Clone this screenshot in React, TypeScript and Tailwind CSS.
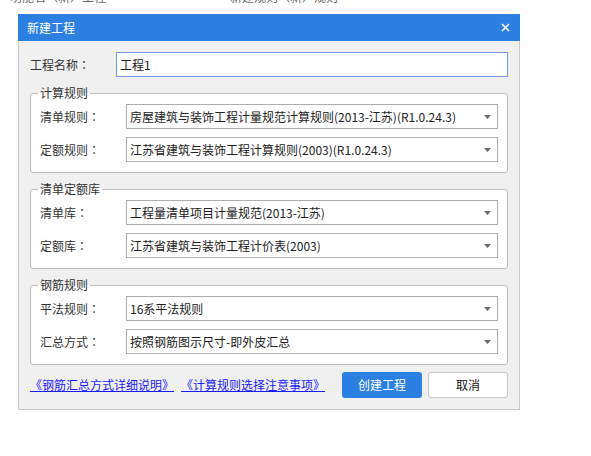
import { ReactNode } from "react";

const FONT = "font-['Noto_Sans_CJK_SC','Noto_Sans',sans-serif]";

function Caret() {
  return (
    <svg width="7" height="4" viewBox="0 0 7 4" className="shrink-0">
      <path d="M0 0H7L3.5 4Z" fill="#6b6b6b" />
    </svg>
  );
}

// label with centred full-width colon, like the original dialog
function Label(props: { text: string; className?: string }) {
  return (
    <div className={`shrink-0 text-[#333] ${props.className ?? ""}`}>
      {props.text}
      <span className="font-['Noto_Sans_CJK_TC',sans-serif]">：</span>
    </div>
  );
}

function SelectRow(props: { label: string; value: string }) {
  const { label, value } = props;
  return (
    <div className="flex items-center">
      <Label text={label} className="w-[86px]" />
      <div className="flex h-[25px] flex-1 items-center justify-between border border-[#adadad] bg-white pl-[3px] pr-[6px] text-[#222]">
        <span className="whitespace-nowrap">{value}</span>
        <Caret />
      </div>
    </div>
  );
}

function Group(props: { title: string; children: ReactNode }) {
  const { title, children } = props;
  return (
    <div className="relative flex h-[80px] flex-col justify-center gap-[8px] rounded-[3px] border border-[#bcbcbc] bg-white px-[9px]">
      <span className="absolute -top-[9px] left-[7px] bg-[linear-gradient(to_bottom,#f0f0f0_50%,#ffffff_50%)] px-[2px] leading-[16px] text-[#333]">
        {title}
      </span>
      {children}
    </div>
  );
}

export default function App() {
  return (
    <div className={`min-h-[456px] w-[591px] bg-white text-[12px] ${FONT}`}>
      <div className="flex h-[14px] overflow-hidden text-[#666]">
        <span className="-mt-[12px] ml-[10px] whitespace-nowrap">功能名（新）工程</span>
        <span className="-mt-[12px] ml-[124px] whitespace-nowrap">新建规则（新）规则</span>
      </div>

      <div className="ml-[18px] w-[502px]">
        <div className="flex h-[27px] items-center justify-between bg-[#2c80e1] pl-[9px] pr-[10px] text-white">
          <span>新建工程</span>
          <svg width="9" height="9" viewBox="0 0 9 9">
            <path d="M1 1L8 8M8 1L1 8" stroke="#fff" strokeWidth="1.6" />
          </svg>
        </div>

        <div className="border border-t-0 border-[#c6cad0] bg-[#f0f0f0] px-[11px] pb-[11px] pt-[11px]">
          <div className="flex items-center">
            <Label text="工程名称" className="w-[86px]" />
            <div className="flex h-[25px] flex-1 items-center border border-[#7398de] bg-white pl-[3px] text-[#222]">
              工程1
            </div>
          </div>

          <div className="mt-[16px] flex flex-col gap-[16px]">
            <Group title="计算规则">
              <SelectRow label="清单规则" value="房屋建筑与装饰工程计量规范计算规则(2013-江苏)(R1.0.24.3)" />
              <SelectRow label="定额规则" value="江苏省建筑与装饰工程计算规则(2003)(R1.0.24.3)" />
            </Group>
            <Group title="清单定额库">
              <SelectRow label="清单库" value="工程量清单项目计量规范(2013-江苏)" />
              <SelectRow label="定额库" value="江苏省建筑与装饰工程计价表(2003)" />
            </Group>
            <Group title="钢筋规则">
              <SelectRow label="平法规则" value="16系平法规则" />
              <SelectRow label="汇总方式" value="按照钢筋图示尺寸-即外皮汇总" />
            </Group>
          </div>

          <div className="mt-[7px] flex items-center">
            <a href="#" className="whitespace-nowrap text-[#1a1aff] underline">
              《钢筋汇总方式详细说明》
            </a>
            <a href="#" className="ml-[7px] whitespace-nowrap text-[#1a1aff] underline">
              《计算规则选择注意事项》
            </a>
            <button className="ml-auto h-[26px] w-[80px] rounded-[3px] bg-[#2c80e1] text-white">创建工程</button>
            <button className="ml-[6px] h-[26px] w-[80px] rounded-[3px] border border-[#c8c8c8] bg-white text-[#111]">
              取消
            </button>
          </div>
        </div>
      </div>
    </div>
  );
}
